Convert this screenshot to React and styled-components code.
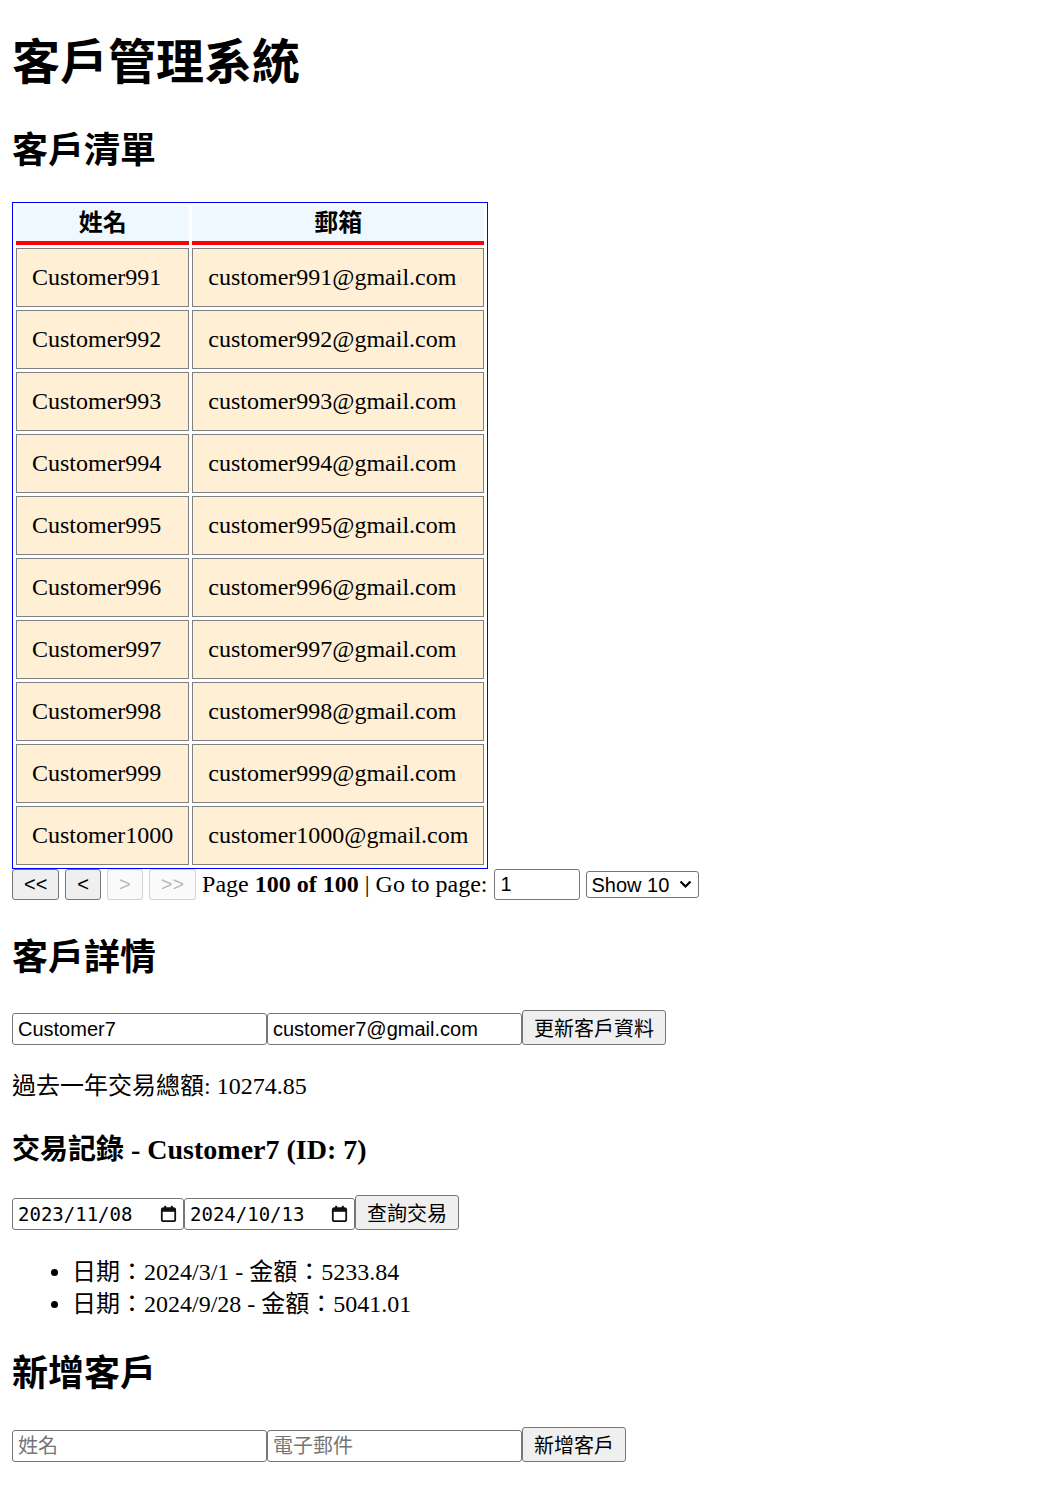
import React from 'react';
import styled, { createGlobalStyle } from 'styled-components';

const Global = createGlobalStyle`
  html, body { margin: 0; padding: 0; background: #ffffff; }
  body {
    font-family: "Liberation Serif", "Noto Sans CJK TC", serif;
    font-size: 24px;
    color: #000000;
  }
`;

const Page = styled.div`
  padding: 0 12px 40px;
`;

const Title = styled.h1`
  font-size: 48px;
  line-height: 56px;
  font-weight: bold;
  margin: 35px 0 0;
`;

const Heading = styled.h2`
  font-size: 36px;
  line-height: 46px;
  font-weight: bold;
  margin: ${(p) => p.$top}px 0 ${(p) => p.$bottom}px;
`;

const SubHeading = styled.h3`
  font-size: 28px;
  line-height: 32px;
  font-weight: bold;
  margin: ${(p) => p.$top}px 0 0;
`;

const Table = styled.table`
  border: 1px solid #0000ff;
  border-collapse: separate;
  border-spacing: 3px;
  font-size: 24px;
`;

const Th = styled.th`
  background: #f0f8ff;
  border-bottom: 4px solid #ff0000;
  padding: 2px 15px;
  line-height: 31px;
  font-weight: bold;
  text-align: center;
`;

const Td = styled.td`
  background: #ffefd5;
  border: 1px solid #808080;
  padding: 15px;
  line-height: 27px;
  white-space: nowrap;
`;

const Pager = styled.div`
  display: flex;
  align-items: center;
  gap: 6px;
  height: 31px;
`;

const PageBtn = styled.button`
  box-sizing: border-box;
  height: 31px;
  margin: 0;
  padding: 0 11px;
  font: 20px "Liberation Sans", sans-serif;
  color: #000000;
  background: #efefef;
  border: 1px solid #767676;
  border-radius: 3px;
  &:disabled {
    color: rgba(16, 16, 16, 0.3);
    background: rgba(239, 239, 239, 0.3);
    border-color: rgba(118, 118, 118, 0.3);
  }
`;

const PagerText = styled.span`
  line-height: 27px;
  white-space: nowrap;
`;

const PageInput = styled.input`
  box-sizing: border-box;
  width: 86px;
  height: 31px;
  margin: 0;
  padding: 0 6px;
  font: 20px "Liberation Sans", sans-serif;
  border: 1px solid #767676;
  border-radius: 3px;
  &::-webkit-inner-spin-button {
    -webkit-appearance: none;
  }
`;

const SelectWrap = styled.span`
  position: relative;
  display: inline-flex;
`;

const ShowSelect = styled.select`
  box-sizing: border-box;
  width: 113px;
  height: 27px;
  margin: 0;
  padding: 0 24px 0 5px;
  appearance: none;
  -webkit-appearance: none;
  font: 20px "Liberation Sans", sans-serif;
  color: #000000;
  background: #ffffff;
  border: 1px solid #767676;
  border-radius: 3px;
`;

const Chevron = styled.svg`
  position: absolute;
  right: 7px;
  top: 9px;
  pointer-events: none;
`;

const FormRow = styled.div`
  display: flex;
  align-items: flex-end;
  margin-top: ${(p) => p.$top}px;
`;

const TextField = styled.input`
  box-sizing: border-box;
  width: 255px;
  height: 32px;
  margin: 0;
  padding: 0 5px;
  font: 20px "Liberation Sans", "Noto Sans CJK TC", sans-serif;
  color: #000000;
  border: 1px solid #767676;
  border-radius: 3px;
  &::placeholder {
    color: #757575;
  }
`;

const ActionBtn = styled.button`
  box-sizing: border-box;
  height: 35px;
  margin: 0;
  padding: 0 11px;
  font: 20px "Liberation Sans", "Noto Sans CJK TC", sans-serif;
  color: #000000;
  background: #efefef;
  border: 1px solid #767676;
  border-radius: 3px;
`;

const DateField = styled.label`
  box-sizing: border-box;
  display: flex;
  align-items: center;
  width: ${(p) => p.$w}px;
  height: 32px;
  padding: 0 6px 0 5px;
  border: 1px solid #767676;
  border-radius: 3px;
  background: #ffffff;
`;

const DateText = styled.input`
  flex: 1;
  min-width: 0;
  border: none;
  outline: none;
  padding: 0;
  margin: 0;
  background: transparent;
  font: 19px "DejaVu Sans Mono", "Liberation Mono", monospace;
  color: #000000;
`;

const CalendarSvg = styled.svg`
  flex: none;
  display: block;
`;

const Summary = styled.p`
  margin: ${(p) => p.$top}px 0 0;
  line-height: 27px;
`;

const TxList = styled.ul`
  margin: ${(p) => p.$top}px 0 0;
  padding-left: 60px;
  list-style: disc;
`;

const TxItem = styled.li`
  line-height: 32px;
`;

const CalendarIcon = () => (
  <CalendarSvg width="17" height="18" viewBox="0 0 17 18" aria-hidden="true">
    <rect x="1.8" y="3.2" width="13.4" height="13" rx="1.8" fill="none" stroke="#111" strokeWidth="1.8" />
    <rect x="1.8" y="3.2" width="13.4" height="3.6" fill="#111" />
    <rect x="4.2" y="0.8" width="2" height="3.4" fill="#111" />
    <rect x="10.8" y="0.8" width="2" height="3.4" fill="#111" />
  </CalendarSvg>
);

const customers = Array.from({ length: 10 }, (_, i) => 991 + i);

const transactions = [
  { date: '2024/3/1', amount: '5233.84' },
  { date: '2024/9/28', amount: '5041.01' },
];

export default function App() {
  return (
    <>
      <Global />
      <Page>
        <Title>客戶管理系統</Title>
        <Heading $top={37} $bottom={28}>客戶清單</Heading>
        <Table>
          <thead>
            <tr>
              <Th>姓名</Th>
              <Th>郵箱</Th>
            </tr>
          </thead>
          <tbody>
            {customers.map((n) => (
              <tr key={n}>
                <Td>Customer{n}</Td>
                <Td>customer{n}@gmail.com</Td>
              </tr>
            ))}
          </tbody>
        </Table>
        <Pager>
          <PageBtn>&lt;&lt;</PageBtn>
          <PageBtn>&lt;</PageBtn>
          <PageBtn disabled>&gt;</PageBtn>
          <PageBtn disabled>&gt;&gt;</PageBtn>
          <PagerText>
            Page <strong>100 of 100</strong> | Go to page:
          </PagerText>
          <PageInput type="number" defaultValue="1" />
          <SelectWrap>
            <ShowSelect defaultValue="10">
              <option value="10">Show 10</option>
              <option value="20">Show 20</option>
            </ShowSelect>
            <Chevron width="13" height="9" viewBox="0 0 13 9" aria-hidden="true">
              <path d="M1.5 1.5 L6.5 6.5 L11.5 1.5" fill="none" stroke="#000" strokeWidth="2.2" />
            </Chevron>
          </SelectWrap>
        </Pager>

        <Heading $top={35} $bottom={0}>客戶詳情</Heading>
        <FormRow $top={29}>
          <TextField defaultValue="Customer7" />
          <TextField defaultValue="customer7@gmail.com" />
          <ActionBtn>更新客戶資料</ActionBtn>
        </FormRow>
        <Summary $top={28}>過去一年交易總額: 10274.85</Summary>

        <SubHeading $top={34}>交易記錄 - Customer7 (ID: 7)</SubHeading>
        <FormRow $top={29}>
          <DateField $w={172}>
            <DateText readOnly value="2023/11/08" />
            <CalendarIcon />
          </DateField>
          <DateField $w={171}>
            <DateText readOnly value="2024/10/13" />
            <CalendarIcon />
          </DateField>
          <ActionBtn>查詢交易</ActionBtn>
        </FormRow>
        <TxList $top={26}>
          {transactions.map((t) => (
            <TxItem key={t.date}>
              日期：{t.date} - 金額：{t.amount}
            </TxItem>
          ))}
        </TxList>

        <Heading $top={31} $bottom={0}>新增客戶</Heading>
        <FormRow $top={30}>
          <TextField placeholder="姓名" />
          <TextField placeholder="電子郵件" />
          <ActionBtn>新增客戶</ActionBtn>
        </FormRow>
      </Page>
    </>
  );
}
